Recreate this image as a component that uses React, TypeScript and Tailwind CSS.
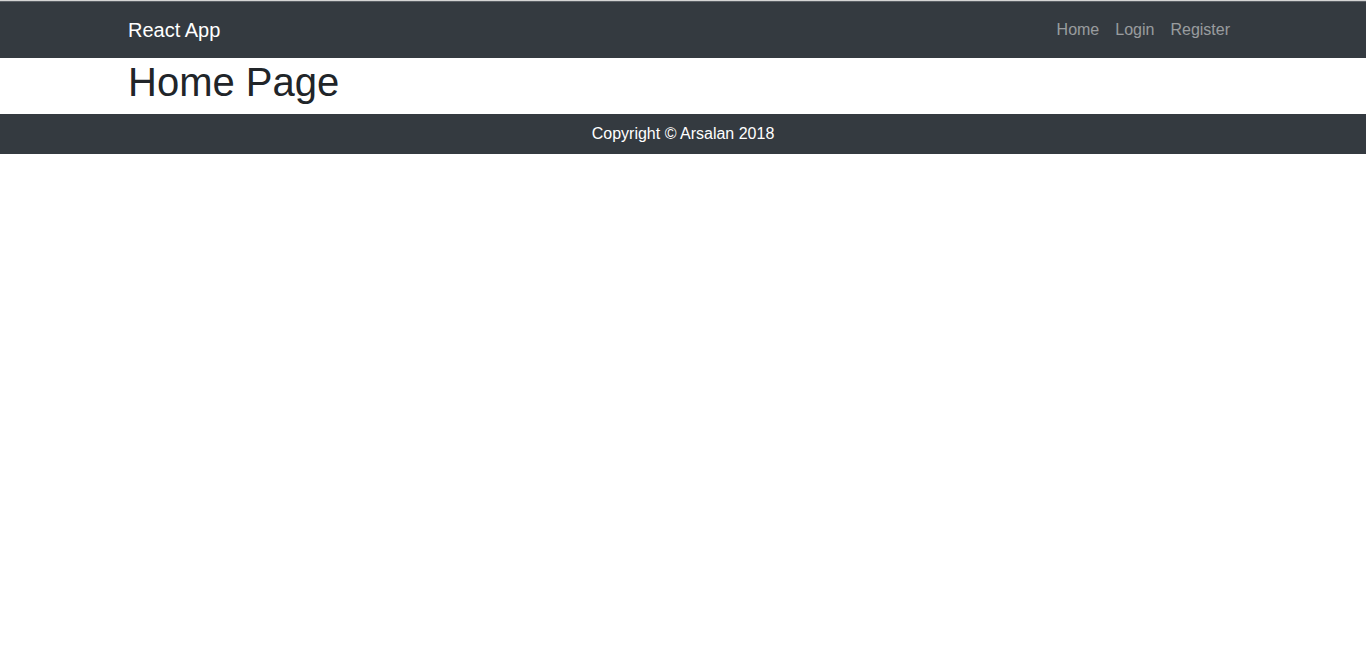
export default function App() {
  const font = { fontFamily: '"Liberation Sans", Arial, sans-serif' };
  return (
    <div style={font} className="min-h-[662px] bg-white text-[16px] leading-[1.5] text-[#212529]">
      <div className="h-px bg-[#d4d4d4]" />
      <div className="h-px bg-[#5b6066]" />
      <nav className="bg-[#343a40] py-2">
        <div className="mx-auto flex max-w-[1140px] items-center justify-between px-[15px]">
          <a className="py-[5px] text-[20px] leading-[30px] text-white">React App</a>
          <ul className="flex">
            <li><a className="block px-2 py-2 leading-6 text-white/50">Home</a></li>
            <li><a className="block px-2 py-2 leading-6 text-white/50">Login</a></li>
            <li><a className="block px-2 py-2 leading-6 text-white/50">Register</a></li>
          </ul>
        </div>
      </nav>
      <main className="mx-auto max-w-[1140px] px-[15px]">
        <h1 className="mb-2 text-[40px] font-normal leading-[1.2]">Home Page</h1>
      </main>
      <footer className="bg-[#343a40] py-2 text-center text-white">
        Copyright © Arsalan 2018
      </footer>
    </div>
  );
}
